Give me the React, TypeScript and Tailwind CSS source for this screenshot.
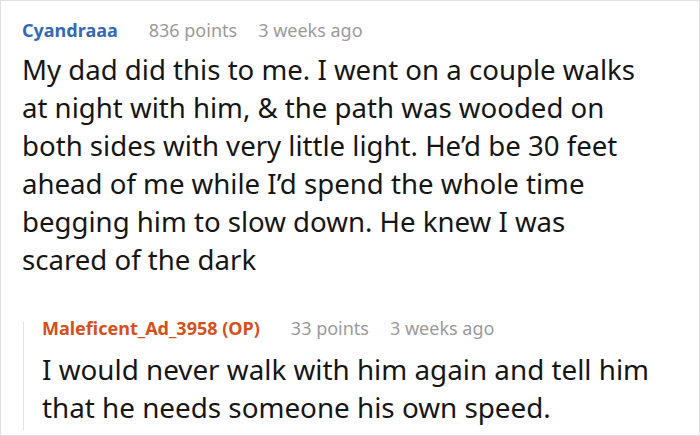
import React from 'react';

const font = { fontFamily: '"Noto Sans", "Open Sans", sans-serif' };

const Meta: React.FC<{ name: string; nameClass: string; points: string; time: string }> = ({ name, nameClass, points, time }) => (
  <div className="flex items-baseline text-[18px] leading-[24px] whitespace-nowrap">
    <span className={`font-bold ${nameClass}`}>{name}</span>
    <span className="ml-[31px] text-[#9a9a9a]">{points}</span>
    <span className="ml-[21px] text-[#9a9a9a]">{time}</span>
  </div>
);

export default function App() {
  return (
    <div className="w-[700px] h-[436px] bg-white border border-[#e0e0e0] overflow-hidden" style={font}>
      <div className="pl-[21px] pt-[17px]">
        <Meta name="Cyandraaa" nameClass="text-[#3569b3]" points="836 points" time="3 weeks ago" />
        <p className="mt-[8px] text-[27.6px] leading-[38px] text-[#161616] whitespace-nowrap">
          My dad did this to me. I went on a couple walks
          <br />
          at night with him, &amp; the path was wooded on
          <br />
          both sides with very little light. He’d be 30 feet
          <br />
          ahead of me while I’d spend the whole time
          <br />
          begging him to slow down. He knew I was
          <br />
          scared of the dark
        </p>
        <div className="mt-[38px] flex">
          <div className="ml-px w-px bg-[#e2e2e2] mt-[6px] mb-[-4px]" />
          <div className="pl-[18px]">
            <Meta name="Maleficent_Ad_3958 (OP)" nameClass="text-[#d6501c]" points="33 points" time="3 weeks ago" />
            <p className="mt-[10px] text-[27.8px] leading-[38px] text-[#161616] whitespace-nowrap">
              I would never walk with him again and tell him
              <br />
              that he needs someone his own speed.
            </p>
          </div>
        </div>
      </div>
    </div>
  );
}
